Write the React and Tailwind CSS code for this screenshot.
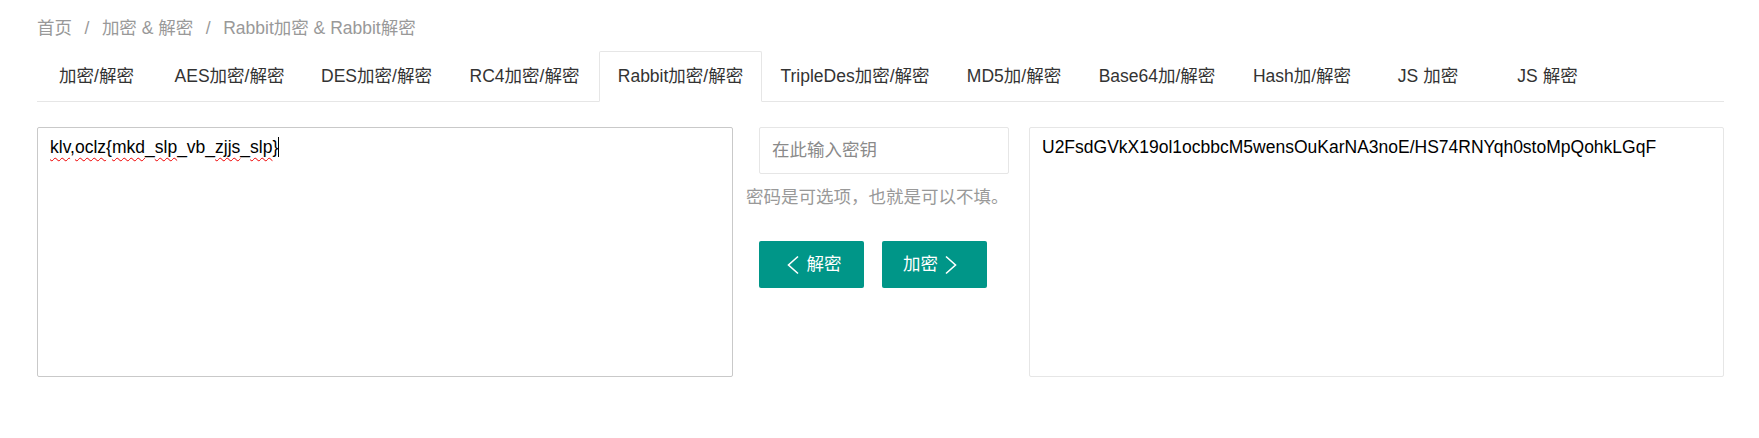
const tabs = [
  { label: '加密/解密', w: 'w-[119px]' },
  { label: 'AES加密/解密', w: 'w-[147px]' },
  { label: 'DES加密/解密', w: 'w-[147px]' },
  { label: 'RC4加密/解密', w: 'w-[149px]' },
  { label: 'Rabbit加密/解密', w: 'w-[163px]', active: true },
  { label: 'TripleDes加密/解密', w: 'w-[186px]' },
  { label: 'MD5加/解密', w: 'w-[132px]' },
  { label: 'Base64加/解密', w: 'w-[154px]' },
  { label: 'Hash加/解密', w: 'w-[136px]' },
  { label: 'JS 加密', w: 'w-[116px]' },
  { label: 'JS 解密', w: 'w-[123px]' },
];

const Wavy = ({ children }) => (
  <span className="underline decoration-wavy decoration-[#e00] decoration-1 underline-offset-[4px]">
    {children}
  </span>
);

function Chevron({ dir }) {
  return (
    <svg width="12" height="20" viewBox="0 0 12 20" fill="none">
      <path
        d={dir === 'left' ? 'M11 1.5 L1.5 10 L11 18.5' : 'M1 1.5 L10.5 10 L1 18.5'}
        stroke="white"
        strokeWidth="1.6"
        strokeLinejoin="miter"
      />
    </svg>
  );
}

export default function App() {
  return (
    <div
      className="min-h-screen bg-white pl-[37px] pr-[35px] pt-[17px] text-[17.5px]"
      style={{ fontFamily: '"Liberation Sans", "Noto Sans CJK SC", sans-serif' }}
    >
      {/* Breadcrumb */}
      <div className="h-[22px] leading-[22px] text-[#999] whitespace-nowrap">
        <span>首页</span>
        <span className="mx-[12.5px]">/</span>
        <span>加密 &amp; 解密</span>
        <span className="mx-[12.5px]">/</span>
        <span>Rabbit加密 &amp; Rabbit解密</span>
      </div>

      {/* Tabs */}
      <ul className="mt-[12px] flex h-[51px] border-b border-[#e6e6e6]">
        {tabs.map((t) => (
          <li
            key={t.label}
            className={`relative ${t.w} h-[50px] leading-[50px] text-center text-[#333] whitespace-nowrap`}
          >
            {t.active && (
              <span className="absolute left-0 top-0 w-full h-[51px] border border-[#e6e6e6] border-b-white rounded-t-[2px] bg-white" />
            )}
            <span className="relative">{t.label}</span>
          </li>
        ))}
      </ul>

      {/* Content */}
      <div className="mt-[25px] flex items-start">
        <div className="w-[696px] h-[250px] border border-[#c9c9c9] rounded-[2px] px-[12px] pt-[7px] leading-[25px] text-black">
          <Wavy>klv</Wavy>,<Wavy>oclz</Wavy>{'{'}<Wavy>mkd</Wavy>_<Wavy>slp</Wavy>_vb_<Wavy>zjjs</Wavy>_<Wavy>slp</Wavy>{'}'}
          <span className="inline-block w-px h-[20px] bg-black align-[-4px]" />
        </div>

        <div className="ml-[13px] w-[270px]">
          <div className="ml-[13px] w-[250px] h-[47px] border border-[#e6e6e6] rounded-[2px] pl-[12px] flex items-center text-[#8a8a8a]">
            在此输入密钥
          </div>
          <div className="mt-[11px] h-[25px] leading-[25px] text-[#999] whitespace-nowrap">
            密码是可选项，也就是可以不填。
          </div>
          <div className="mt-[31px] ml-[13px] flex gap-[17.5px]">
            <button className="w-[105px] h-[47px] rounded-[2px] bg-[#009688] text-white flex items-center justify-center gap-[8px] pl-[5px]">
              <Chevron dir="left" />
              <span>解密</span>
            </button>
            <button className="w-[105px] h-[47px] rounded-[2px] bg-[#009688] text-white flex items-center justify-center gap-[7px] pr-[8px]">
              <span>加密</span>
              <Chevron dir="right" />
            </button>
          </div>
        </div>

        <div className="ml-[13px] flex-1 h-[250px] border border-[#e6e6e6] rounded-[2px] px-[12px] pt-[7px] leading-[25px] text-black break-all">
          U2FsdGVkX19ol1ocbbcM5wensOuKarNA3noE/HS74RNYqh0stoMpQohkLGqF
        </div>
      </div>
    </div>
  );
}
